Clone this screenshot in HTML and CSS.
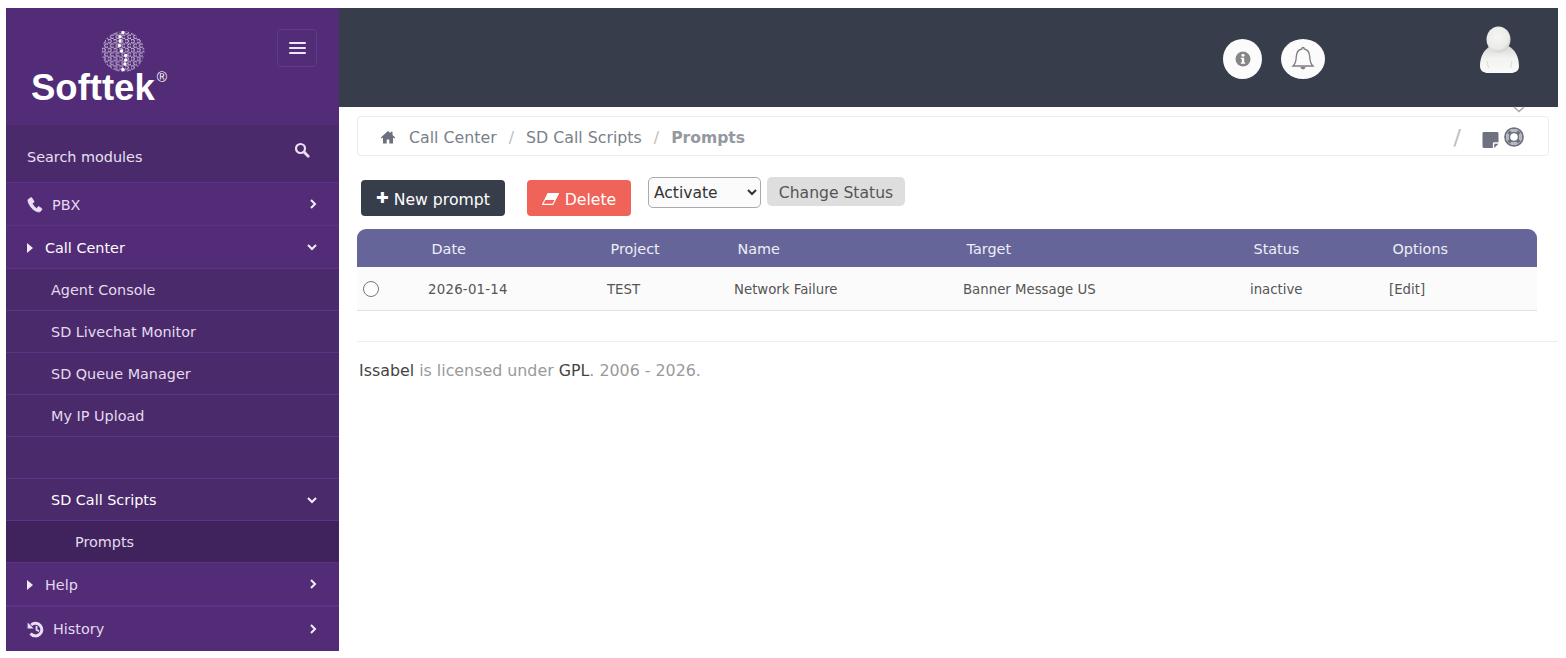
FILE: index.html
```html
<!DOCTYPE html>
<html lang="en">
<head>
<meta charset="utf-8">
<title>Prompts</title>
<link rel="stylesheet" href="styles.css">
</head>
<body>
<div class="shell">
  <aside class="sidebar">
    <div class="brand">
      <div class="logo">
        <svg class="logo-mark" width="44" height="41" viewBox="0 0 44 41">
          <defs>
            <pattern id="hex" width="5.8" height="8.8" patternUnits="userSpaceOnUse" x="1" y="-.8">
              <circle cx="1.5" cy="2.2" r="1.85" fill="none" stroke="#f0e9f6" stroke-width=".9"/>
              <circle cx="4.400" cy="6.600" r="1.85" fill="none" stroke="#f0e9f6" stroke-width=".9"/>
            </pattern>
          </defs>
          <ellipse cx="22" cy="20.500" rx="21.500" ry="20.500" fill="url(#hex)"/>
          <g fill="#fff">
            <circle cx="22" cy="1.600" r="1.7"/><circle cx="19" cy="5.700" r="1.7"/><circle cx="19" cy="10" r="1.7"/>
            <circle cx="18.500" cy="14.500" r="1.7"/><circle cx="20.500" cy="20" r="1.7"/><circle cx="24.700" cy="24.500" r="1.7"/>
            <circle cx="24.700" cy="29" r="1.7"/><circle cx="24" cy="33" r="1.7"/><circle cx="22" cy="38.500" r="1.7"/>
          </g>
        </svg>
        <div class="logo-word">Softtek<sup class="logo-reg">®</sup></div>
      </div>
      <button class="burger" type="button" aria-label="Menu">
        <span></span><span></span><span></span>
      </button>
    </div>
    <div class="search">
      <span>Search modules</span>
      <svg class="search-icon" width="16" height="16" viewBox="0 0 16 16"><circle cx="6.500" cy="6.500" r="4.500" fill="none" stroke="#eadff3" stroke-width="2.200"/><path d="M10 10l4.200 4.200" stroke="#eadff3" stroke-width="2.800" stroke-linecap="round"/></svg>
    </div>
    <nav class="menu">
      <a class="item tall">
        <svg class="ico" width="16" height="16" viewBox="0 0 16 16"><path d="M3.600.8 1.600 2C.6 2.800.8 4.400 1.500 6c1.500 3.600 4.700 7.300 8.200 8.600 1.500.6 3 .6 3.900-.3l1.300-1.700c.3-.5.2-.9-.2-1.200L12 9.700c-.4-.2-.8-.1-1.100.2l-1 1.300c-.2.2-.4.2-.6.1C8 10.500 6.200 8.300 5.500 6.800c-.1-.3-.1-.5.1-.6l1.100-.8c.4-.3.5-.7.3-1.100L5 1c-.3-.5-.9-.6-1.400-.2z" fill="#e9def2" stroke="#e9def2" stroke-width=".6"/></svg>
        <span class="label lab-pbx">PBX</span>
        <svg class="chev" width="10" height="12" viewBox="0 0 10 12"><path d="M3 2l4 4-4 4" fill="none" stroke="#f3edf8" stroke-width="2"/></svg>
      </a>
      <a class="item tall active">
        <span class="tri"></span>
        <span class="label">Call Center</span>
        <svg class="chev" width="12" height="10" viewBox="0 0 12 10"><path d="M2 3l4 4 4-4" fill="none" stroke="#f3edf8" stroke-width="2"/></svg>
      </a>
      <a class="item sub">Agent Console</a>
      <a class="item sub">SD Livechat Monitor</a>
      <a class="item sub">SD Queue Manager</a>
      <a class="item sub">My IP Upload</a>
      <a class="item sub"></a>
      <a class="item sub active">SD Call Scripts
        <svg class="chev" width="12" height="10" viewBox="0 0 12 10"><path d="M2 3l4 4 4-4" fill="none" stroke="#f3edf8" stroke-width="2"/></svg>
      </a>
      <a class="item leaf">Prompts</a>
      <a class="item tall">
        <span class="tri"></span>
        <span class="label">Help</span>
        <svg class="chev" width="10" height="12" viewBox="0 0 10 12"><path d="M3 2l4 4-4 4" fill="none" stroke="#f3edf8" stroke-width="2"/></svg>
      </a>
      <a class="item last">
        <svg class="ico" width="17" height="17" viewBox="0 0 17 17"><path d="M4.200 4A6.300 6.300 0 1 1 3.600 12.500" fill="none" stroke="#e9def2" stroke-width="3"/><path d="M.6 1.500v6h6z" fill="#e9def2"/><path d="M9.500 5v3.700l2.500 1.500" fill="none" stroke="#e9def2" stroke-width="1.800"/></svg>
        <span class="label lab-hist">History</span>
        <svg class="chev" width="10" height="12" viewBox="0 0 10 12"><path d="M3 2l4 4-4 4" fill="none" stroke="#f3edf8" stroke-width="2"/></svg>
      </a>
    </nav>
  </aside>
  <main class="main">
    <header class="topbar">
      <div class="round round-info">
        <svg width="16" height="16" viewBox="0 0 16 16"><circle cx="8" cy="8" r="7.500" fill="#868686"/><circle cx="8" cy="4.300" r="1.500" fill="#fff"/><path d="M5.800 6.700h3.400v4.700h1v1.400H5.800v-1.400h1V8.100h-1z" fill="#fff"/></svg>
      </div>
      <div class="round round-bell">
        <svg width="24" height="26" viewBox="0 0 24 26"><path d="M12 1.500c.8 0 1.200.6 1.200 1.500 4 .8 5.300 4 5.500 7.500.2 4.500 1 7.500 3.300 9.500H2c2.300-2 3.100-5 3.300-9.500.2-3.500 1.500-6.700 5.500-7.500 0-.9.400-1.500 1.200-1.500z" fill="none" stroke="#7d7d82" stroke-width="1.300"/><path d="M9.500 21c.3 1.500 1.200 2.300 2.500 2.300s2.200-.8 2.500-2.300z" fill="#8a7a70"/></svg>
      </div>
      <svg class="avatar" width="44" height="50" viewBox="0 0 44 50">
        <defs>
          <radialGradient id="skin" cx=".45" cy=".4" r=".65"><stop offset="0" stop-color="#f6f6f4"/><stop offset=".7" stop-color="#ebebe8"/><stop offset="1" stop-color="#c9c9c5"/></radialGradient>
          <linearGradient id="body" x1="0" y1="0" x2="0" y2="1"><stop offset="0" stop-color="#d8d8d4"/><stop offset=".45" stop-color="#f2f2f0"/><stop offset="1" stop-color="#fafaf9"/></linearGradient>
        </defs>
        <path d="M13 21C6 24 2 32 2 41c0 5 4 7 8 7h23c4 0 8-2 8-7 0-9-4-17-11-20-5 5-12 5-17 0z" fill="url(#body)"/>
        <path d="M9 36l1.500 7M34 36l-1.500 7" stroke="#dcdcd8" stroke-width="1" fill="none"/>
        <ellipse cx="20.500" cy="14.500" rx="12" ry="13" fill="url(#skin)"/>
      </svg>
    </header>
    <svg class="collapse" width="14" height="8" viewBox="0 0 14 8"><path d="M2 1l5 4.500L12 1" fill="none" stroke="#a8a8a8" stroke-width="1.600"/></svg>
    <div class="crumbs">
      <svg class="home" width="16" height="14" viewBox="0 0 16 14"><path d="M8 1 .8 7.400l1 1L3 7.400V13.500h3.700V9.500h2.600v4H13V7.400l1.200 1 1-1L12.500 5V1.800h-2v1.400z" fill="#6c6f7c"/></svg>
      <span class="crumb">Call Center</span><span class="sep">/</span>
      <span class="crumb">SD Call Scripts</span><span class="sep">/</span>
      <strong class="crumb-now">Prompts</strong>
      <span class="crumb-tools">
        <span class="sep sep-tools">/</span>
        <svg class="note" width="17" height="16" viewBox="0 0 17 17"><path d="M0 1.500C0 .7.700 0 1.500 0h14c.8 0 1.500.7 1.500 1.500V11h-4.500c-.8 0-1.500.7-1.500 1.500V17H1.500C.7 17 0 16.300 0 15.500z" fill="#6d7180"/><path d="M12.500 17v-4.500H17z" fill="#6d7180"/></svg>
        <svg class="ring" width="20" height="20" viewBox="0 0 20 20"><circle cx="10" cy="10" r="8.900" fill="none" stroke="#6d7180" stroke-width="1.900"/><circle cx="10" cy="10" r="4.700" fill="none" stroke="#6d7180" stroke-width="1.800"/><circle cx="10" cy="10" r="6.800" fill="none" stroke="#b4b6bd" stroke-width="2.400"/><path d="M4.600 4.600l2.500 2.500M15.400 4.600l-2.500 2.500M4.600 15.400l2.500-2.500M15.400 15.400l-2.500-2.500" stroke="#6d7180" stroke-width="3.400"/></svg>
      </span>
    </div>
    <div class="toolbar">
      <button class="btn btn-dark" type="button"><span class="plus">✚</span> New prompt</button>
      <button class="btn btn-red" type="button">
        <svg width="17" height="12" viewBox="0 0 17 12"><path d="M6 .6h10.400L10.800 11.400H.6z" fill="none" stroke="#fff" stroke-width="1.100"/><path d="M6 .6h10.400L13 7H3z" fill="#fff"/></svg>
        Delete</button>
      <div class="status-tools">
        <select class="select"><option>Activate</option></select>
        <button class="btn-grey" type="button">Change Status</button>
      </div>
    </div>
    <table class="grid">
      <colgroup>
        <col class="c0"><col class="c1"><col class="c2"><col class="c3"><col class="c4"><col class="c5"><col class="c6">
      </colgroup>
      <thead>
        <tr><th></th><th>Date</th><th>Project</th><th>Name</th><th>Target</th><th>Status</th><th>Options</th></tr>
      </thead>
      <tbody>
        <tr>
          <td class="radio-cell"><span class="radio"></span></td>
          <td class="date">2026-01-14</td><td>TEST</td><td>Network Failure</td><td>Banner Message US</td><td>inactive</td><td>[Edit]</td>
        </tr>
      </tbody>
    </table>
    <footer class="footer"><span class="dark">Issabel</span> is licensed under <span class="dark">GPL</span>. 2006 - 2026.</footer>
  </main>
</div>
</body>
</html>
```
FILE: styles.css
```css
* { box-sizing: border-box; }
html, body { height: 100%; }
body {
  margin: 0;
  padding: 8px 8px 7px 6px;
  background: #fff;
  font-family: "DejaVu Sans", Verdana, sans-serif;
  overflow: hidden;
}
.shell { display: flex; height: 643px; }

/* Sidebar */
.sidebar { width: 333px; flex: none; background: #532c77; color: #e9e0f1; display: flex; flex-direction: column; }
.brand { height: 117px; display: flex; justify-content: space-between; padding: 21px 22px 0 25px; }
.logo { display: flex; flex-direction: column; align-items: flex-start; }
.logo-mark { margin: 2px 0 0 70px; display: block; }
.logo-word { font-family: "Liberation Sans", Arial, sans-serif; font-weight: 700; font-size: 36.5px; line-height: 30px; color: #fff; margin-top: 1px; }
.logo-reg { font-size: 14px; font-weight: 400; line-height: 0; vertical-align: 18px; margin-left: 2px; }
.burger { width: 40px; height: 38px; background: transparent; border: 1px solid #5f3a8c; border-radius: 4px; display: flex; flex-direction: column; justify-content: center; align-items: center; gap: 2.5px; padding: 0; }
.burger span { display: block; width: 17px; height: 2.5px; background: #eee6f5; border-radius: 1px; }
.search { height: 58px; background: #4a2a6a; border-bottom: 1px solid #5c3389; display: flex; justify-content: space-between; padding: 0 29px 0 21px; align-items: center; font-size: 14.4px; color: #e9e0f1; }
.search > span { padding-top: 6px; }
.search-icon { margin-top: -7px; }
.menu { display: flex; flex-direction: column; flex: 1; }
.item { height: 42px; flex: none; display: flex; align-items: center; padding: 0 21px; font-size: 14.4px; color: #e4daee; border-bottom: 1px solid #5c3389; position: relative; }
.item.tall { height: 43px; padding-top: 2px; }
.item .chev { position: absolute; right: 21px; top: 50%; transform: translateY(-50%); }
.item.active { color: #fff; }
.item.sub { background: #4a2a6a; padding-left: 45px; }
.item.leaf { background: #40225c; padding-left: 69px; }
.item.last { border-bottom: 0; height: 45px; border-top: 1px solid #5c3389; }
.ico { flex: none; }
.label { margin-left: 10px; }
.lab-pbx { margin-left: 9px; }
.lab-hist { margin-left: 9px; }
.tri { width: 0; height: 0; border-left: 6px solid #f0e9f6; border-top: 5px solid transparent; border-bottom: 5px solid transparent; margin-right: 2px; }

/* Main */
.main { flex: 1; min-width: 0; position: relative; }
.topbar { height: 99px; background: #383d4b; display: flex; align-items: flex-start; padding-left: 884px; }
.round { background: #fbfbfb; display: flex; align-items: center; justify-content: center; margin-top: 31px; height: 40px; border-radius: 50%; }
.round-info { width: 39px; }
.round-bell { width: 44px; margin-left: 19px; }
.avatar { margin: 17px 0 0 153px; }
.collapse { position: absolute; right: 32px; top: 98px; }
.crumbs { margin: 9px 9px 0 18px; height: 40px; border: 1px solid #ececec; border-radius: 4px; display: flex; align-items: center; padding: 2px 24px 0 22px; font-size: 15.8px; color: #7a7f8a; }
.home { margin-right: 13px; margin-top: -1px; }
.sep { color: #bdbdbd; margin: 0 12px; }
.crumb-now { color: #95989f; font-weight: 700; font-size: 15.6px; padding-top: 1px; }
.crumb-tools { margin-left: auto; display: flex; align-items: flex-start; }
.sep-tools { font-size: 22px; line-height: 20px; margin: 1px 21px 0 0; }
.note { margin-top: 5px; }
.ring { margin: 0 0 0 5px; }
.toolbar { display: flex; align-items: flex-start; margin: 21px 0 0 22px; height: 52px; }
.btn { height: 36px; border: 0; border-radius: 4px; color: #fff; font: 15.7px "DejaVu Sans", sans-serif; padding: 2px 0 0; margin-top: 3px; display: flex; align-items: center; justify-content: center; }
.btn-dark { width: 144px; background: #383d4b; gap: 5px; }
.plus { font-size: 15px; margin-top: -2px; }
.btn-red { width: 104px; background: #ef6358; margin-left: 22px; gap: 6px; }
.status-tools { display: flex; align-items: flex-start; margin-left: 17px; gap: 6px; }
.select { width: 113px; height: 31px; font: 15.5px "DejaVu Sans", sans-serif; color: #333; background: #fbfbfb; border: 1px solid #aaa; border-radius: 5px; padding: 1px 0 0 1px; }
.btn-grey { height: 29px; width: 138px; background: #dedede; border: 0; border-radius: 5px; color: #555; font: 15.6px "DejaVu Sans", sans-serif; padding: 2px 0 0; }
.grid { margin-left: 18px; width: 1180px; border-collapse: separate; border-spacing: 0; table-layout: fixed; }
.c0 { width: 67px; } .c1 { width: 179px; } .c2 { width: 127px; } .c3 { width: 229px; } .c4 { width: 287px; } .c5 { width: 139px; } .c6 { width: 152px; }
.grid th { background: #65659a; color: #eeeef5; height: 38px; padding: 1px 0 0 7.5px; text-align: left; font-size: 14.4px; font-weight: 400; }
.grid th:first-child { border-top-left-radius: 9px; }
.grid th:last-child { border-top-right-radius: 9px; }
.grid td { height: 44px; background: #fbfbfb; border-bottom: 1px solid #e2e2e2; padding: 2px 0 0 4px; color: #555; font-size: 13.3px; }
.grid td.date { letter-spacing: .25px; }
.grid td.radio-cell { padding: 0 0 0 6px; }
.radio { display: block; width: 16px; height: 16px; border: 1px solid #767676; border-radius: 50%; background: #fff; }
.footer { margin: 30px 0 0 18px; border-top: 1px solid #eee; padding: 19px 0 0 2px; font-size: 15.85px; color: #9a9a9a; }
.dark { color: #444; }
```
